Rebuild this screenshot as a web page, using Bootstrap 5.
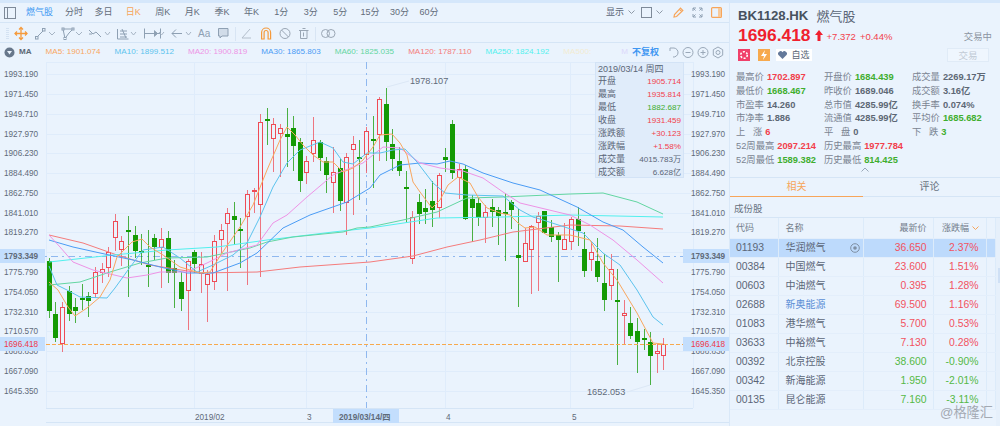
<!DOCTYPE html>
<html lang="zh">
<head>
  <meta charset="UTF-8" />
  <meta name="viewport" content="width=device-width, initial-scale=1.0" />
  <title>BK1128.HK 燃气股</title>
  <link href="https://cdn.jsdelivr.net/npm/bootstrap@5.3.0/dist/css/bootstrap.min.css" rel="stylesheet" />
  <style>
    html, body { height: 426px; overflow: hidden; }
    body {
      background: #eaf3fd;
      color: #5b6677;
      font: 10px/1 "Liberation Sans", "Noto Sans CJK SC", sans-serif;
    }
    .page { height: 426px; border-top: 3px solid #d5e7fb; }
    .left-pane { width: 729px; flex: none; }
    .right-pane { width: 271px; flex: none; border-left: 1px solid #d9e8f8; }
    .bar-top { height: 20px; padding-left: 4px; border-bottom: 1px solid #d5e5f6; font-size: 9px; }
    .panel-ico { margin-right: 10px; flex: none; }
    .bar-top span.tf { width: 29.6px; text-align: center; color: #626c7a; }
    .bar-top span.tf.first { width: 33.2px; color: #3b97f2; text-align: left; }
    .bar-top span.tf.on { color: #f7a55a; }
    .bar-right { padding-right: 7px; gap: 8px; }
    .show-btn { margin-right: -2px; }
    .pen-ico { margin-left: 2px; }
    .bar-tools { height: 20px; padding-left: 0; border-bottom: 1px solid #d5e5f6; }
    .bar-tools text { font: 10px "Liberation Sans", sans-serif; fill: #8ea0b3; }
    .legend-row { height: 19px; padding: 0 5px 0 4px; font-size: 8.1px; white-space: nowrap; gap: 14px; }
    .legend-mark { color: #5d6875; gap: 4px; }
    .fq-btn { color: #3f97f2; font-size: 9px; font-weight: 700; margin-right: -4px; }
    .fq-tail { color: #dcd7fb; margin-right: -10px; }
    .chart-wrap { height: 361px; }
    .chart-wrap svg { display: block; }
    .chart-wrap text { font: 8.2px "Liberation Sans", "Noto Sans CJK SC", sans-serif; fill: #5f6a79; }
    .info-box {
      position: absolute; left: 595px; top: 0; width: 89px; height: 116px;
      background: #e0ecfa; border: 1px solid #d3e3f6; padding: 0 2px;
      font-size: 9px; color: #5b6677;
    }
    .info-box div { height: 13px; line-height: 13px; white-space: nowrap; }
    .info-box div.info-date { height: 12px; line-height: 12px; }
    .info-box b { font-weight: 400; font-size: 8.1px; }
    .up { color: #f23f4c; }
    .down { color: #3fae2f; }
    .hd-top { height: 14px; margin-top: 1px; }
    .hd-code { font-size: 13.2px; font-weight: 700; color: #47525f; }
    .hd-name { font-size: 13px; color: #5b6677; margin-left: 8px; }
    .hd-price { font-size: 17.4px; font-weight: 700; color: #f01f2e; line-height: 20px; }
    .hd-chg { font-size: 9.5px; color: #f23f4c; }
    .hd-state { font-size: 9.4px; color: #8a94a1; }
    .hd-icons { margin-top: 3px; }
    .trade-btn {
      width: 42px; height: 14px; line-height: 13px; text-align: center; background: #eff6fe;
      border: 1px solid #e0ebf7; color: #c2cbd6; font-size: 9.5px; margin-right: 3px;
    }
    .self-btn { background: #fff; height: 12px; width: 36px; font-size: 9px; color: #5b6677; margin-left: 6px; }
    .stat-grid { display: grid; grid-template-columns: 88px 88px auto; row-gap: 0; padding-left: 6px; margin-top: 9px; }
    .stat-grid > div { height: 13.75px; line-height: 13.75px; font-size: 9.3px; white-space: nowrap; }
    .stat-grid .lb { color: #7a8492; }
    .stat-grid .vl { font-weight: 700; margin-left: 3px; }
    .gray-v { color: #5d6875; }
    .fold-row { height: 10px; line-height: 0; }
    .tab-row { height: 20px; border-top: 1px solid #d5e5f6; border-bottom: 1px solid #d5e5f6; font-size: 10px; }
    .tab-on { width: 133px; height: 19px; line-height: 18px; color: #f7a55a; border-bottom: 1px solid #f7a55a; text-align: center; }
    .tab-off { width: 133px; line-height: 18px; text-align: center; color: #687280; }
    .sec-title { height: 21px; line-height: 23px; padding-left: 4px; font-size: 9.5px; color: #687280; border-bottom: 1px solid #d5e5f6; }
    .stock-table { width: 265px; table-layout: fixed; border-collapse: collapse; font-size: 10.4px; }
    .stock-table td, .stock-table th {
      height: 19px; padding: 0 6px; border-right: 1px solid #dcebfa; border-bottom: 1px solid #e3eefb;
      color: #5b6677; font-weight: 400; white-space: nowrap;
    }
    .stock-table th { height: 20px; font-size: 9px; color: #727c8a; }
    .stock-table td.name-cell { font-size: 10px; padding-left: 7px; }
    .stock-table .pct-cell { padding-right: 7px; }
    .stock-table td.up { color: #f2525f; }
    .stock-table td.down { color: #55b945; }
    .stock-table tr.picked td { background: #bddafc; }
    .stock-table td.link-name { color: #5b8fd6; }
    .eye-mark { margin-right: -3px; }
    .table-box { height: 198px; }
    .scroll-side { width: 5px; background: #e6f0fb; }
    .scroll-thumb { height: 15px; margin: 50px 0 0 2px; background: #cfe0f5; }
    .stamp { position: absolute; right: 7px; bottom: 7px; font-size: 13.2px; color: #a3a9b2; }
  </style>
</head>
<body>
<div class="page d-flex">
  <div class="left-pane d-flex flex-column">
    <div class="bar-top d-flex align-items-center">
      <svg class="panel-ico" width="12" height="12" viewBox="0 0 12 12"><rect x=".5" y=".5" width="11" height="11" fill="none" stroke="#7e8a99"/><path d="M3.500 1v10" stroke="#7e8a99"/></svg>
      <span class="tf first">燃气股</span>
      <span class="tf">分时</span><span class="tf">多日</span><span class="tf on">日K</span><span class="tf">周K</span><span class="tf">月K</span><span class="tf">季K</span><span class="tf">年K</span><span class="tf">1分</span><span class="tf">3分</span><span class="tf">5分</span><span class="tf">15分</span><span class="tf">30分</span><span class="tf">60分</span>
      <div class="ms-auto d-flex align-items-center bar-right">
        <span class="d-flex align-items-center gap-1 show-btn">显示<svg width="7" height="5" viewBox="0 0 7 5"><path d="M.5.5 3.500 3.500 6.500.5" fill="none" stroke="#8f9aa8"/></svg></span>
        <span class="d-flex align-items-center gap-1"><svg width="11" height="11" viewBox="0 0 11 11"><rect x=".5" y=".5" width="10" height="10" fill="none" stroke="#7e8a99"/></svg><svg width="7" height="5" viewBox="0 0 7 5"><path d="M.5.5 3.500 3.500 6.500.5" fill="none" stroke="#8f9aa8"/></svg></span>
        <svg class="pen-ico" width="11" height="11" viewBox="0 0 11 11"><path d="M1 10 1.500 7.500 7.500 1.200 9.800 3.400 3.600 9.500Z M6.500 2.400 8.700 4.600" fill="none" stroke="#f7a55a" stroke-width="1.200"/></svg>
        <svg width="11" height="11" viewBox="0 0 11 11"><path d="M1 4V1h3M7 1h3v3M1 7v3h3M7 10h3V7M1 1l2.500 2.500M10 1 7.500 3.500M1 10l2.500-2.500M10 10 7.500 7.500" fill="none" stroke="#8ea0b3"/></svg>
        <svg width="11" height="11" viewBox="0 0 11 11"><rect x=".6" y=".6" width="9.800" height="9.800" rx="1" fill="none" stroke="#f7a55a" stroke-width="1.200"/><rect x="7" y="1" width="3" height="9" fill="#f7c99a"/></svg>
      </div>
    </div>
    <div class="bar-tools d-flex align-items-center">
      <svg width="340" height="20" viewBox="0 0 340 20">
        <g stroke="#d4e2f2"><path d="M6 5.500h3M6 7.500h3M6 9.500h3M6 11.500h3M6 13.500h3M6 15.500h3"/></g>
        <g fill="none" stroke="#f59a3c" stroke-width="1.300"><path d="M21 5v11M15 10.500h12"/><path d="M19 6.500l2-2 2 2M19 14.500l2 2 2-2M17 8.500l-2 2 2 2M25 8.500l2 2-2 2"/></g>
        <g fill="none" stroke="#8ea0b3">
          <path d="M37 14 43 8"/><rect x="35.500" y="13.500" width="2.500" height="2.500"/><rect x="42.500" y="5.500" width="2.500" height="2.500"/>
          <path d="M63 6h10l-4 4-4 5.500Z"/><rect x="62" y="5" width="2" height="2" fill="#eaf3fd"/><rect x="72" y="5" width="2" height="2" fill="#eaf3fd"/><rect x="64" y="14.500" width="2" height="2" fill="#eaf3fd"/>
          <path d="M89 7l4 4 3-2 5 5M89 11l3 0"/>
          <path d="M117.500 6v10h11M120 8h7M120 11h7M120 14h7M122 6l4 9"/>
          <path d="M144.500 5.500v10M160.500 5.500v10M145 10.500h15"/><path d="M154 7.500l3.500 3-3.500 3" fill="#8ea0b3"/>
          <path d="M172 10.500h10M176 6.500l-4 4 4 4"/>
          <path d="M218.500 5.500h9.500v7.500h-6l-2 2v-2h-1.500Z" fill="#b8c6d6" fill-opacity=".5"/>
          <path d="M235.500 4v14" stroke="#d8e5f4"/>
          <path d="M250 6l-8 9h9" stroke="#b4bfcc"/>
          <circle cx="285" cy="10.500" r="5" stroke="#9aa6b4"/><path d="M281.500 7 288.500 14" stroke="#9aa6b4"/>
          <path d="M299 7.500h9.500M300.500 7.500v8h6.500v-8M302.500 5.500h3" stroke="#9aa6b4"/><path d="M303.500 9.500v4" stroke="#9aa6b4"/>
          <path d="M315.500 4v14" stroke="#d8e5f4"/>
          <circle cx="325.500" cy="10.500" r="4" stroke="#9aa6b4"/><circle cx="331" cy="10.500" r="4" stroke="#9aa6b4"/>
        </g>
        <g fill="none" stroke="#a6b4c4"><path d="M49 9l3 3 3-3M76 9l3 3 3-3M105 9l2.500 3 2.500-3M131 9l2.500 3 2.500-3M159 9l2.500 3 2.500-3M186 9l2.500 3 2.500-3"/></g>
        <path d="M261.600 16V9.500a4.500 4.500 0 0 1 9 0V16h-2.500V9.500a2 2 0 0 0-4 0V16Z" fill="none" stroke="#f59a3c" stroke-width="1.200"/>
        <text x="198" y="14">Aa</text>
      </svg>
    </div>
    <div class="legend-row d-flex align-items-center">
      <span class="d-flex align-items-center legend-mark">
        <svg width="11" height="11" viewBox="0 0 11 11"><circle cx="5.500" cy="5.500" r="5" fill="#67778b"/><path d="M3 4h5L5.500 7.500Z" fill="#eaf3fd"/></svg>
        <span class="fw-bold">MA</span>
      </span>
      <span style="color:#f9a75f">MA5: 1901.074</span>
      <span style="color:#5cc3ee">MA10: 1899.512</span>
      <span style="color:#ee93e6">MA20: 1900.819</span>
      <span style="color:#4b9cf5">MA30: 1865.803</span>
      <span style="color:#63d6a2">MA60: 1825.035</span>
      <span style="color:#f57c7c">MA120: 1787.110</span>
      <span style="color:#52f0ee">MA250: 1824.192</span>
      <span style="color:#f3ecd2">MA500:</span>
      <span class="ms-auto fq-tail">M</span>
      <span class="fq-btn">不复权</span>
      <svg width="55" height="13" viewBox="0 0 55 13" fill="none" stroke="#9aa8b8">
        <path d="M1 2h4a4.500 4.500 0 1 1-1 9"/><path d="M1 2v3"/>
        <circle cx="19" cy="6.500" r="5"/><path d="M16.500 6.500h5"/>
        <circle cx="34" cy="6.500" r="5"/><path d="M31.500 6.500h5M34 4v5"/>
        <circle cx="49" cy="6.500" r="2"/><path d="M49 1l4.700 2.700v5.500L49 12l-4.700-2.800V3.700Z"/>
      </svg>
    </div>
    <div class="chart-wrap position-relative">
      <svg id="chart" width="729" height="361" viewBox="0 62 729 361"></svg>
      <div class="info-box">
        <div class="info-date">2019/03/14 周四</div>
        <div class="d-flex justify-content-between"><span>开盘</span><b class="up">1905.714</b></div>
        <div class="d-flex justify-content-between"><span>最高</span><b class="up">1935.814</b></div>
        <div class="d-flex justify-content-between"><span>最低</span><b class="down">1882.687</b></div>
        <div class="d-flex justify-content-between"><span>收盘</span><b class="up">1931.459</b></div>
        <div class="d-flex justify-content-between"><span>涨跌额</span><b class="up">+30.123</b></div>
        <div class="d-flex justify-content-between"><span>涨跌幅</span><b class="up">+1.58%</b></div>
        <div class="d-flex justify-content-between"><span>成交量</span><b>4015.783万</b></div>
        <div class="d-flex justify-content-between"><span>成交额</span><b>6.628亿</b></div>
      </div>
    </div>
  </div>
  <div class="right-pane d-flex flex-column position-relative">
    <div class="px-2" style="padding-top:5px">
      <div class="d-flex align-items-center hd-top"><span class="hd-code">BK1128.HK</span><span class="hd-name">燃气股</span></div>
      <div class="d-flex align-items-end" style="margin-top:2px">
        <span class="hd-price">1696.418</span>
        <svg class="mx-1 mb-1" width="8" height="11" viewBox="0 0 8 11"><path d="M4 0 8 5H5.500V11h-3V5H0Z" fill="#f01f2e"/></svg>
        <span class="hd-chg mb-1">+7.372</span><span class="hd-chg mb-1 ms-1">+0.44%</span>
        <span class="ms-auto mb-1 hd-state">交易中</span>
      </div>
      <div class="d-flex align-items-center hd-icons">
        <svg width="12" height="12" viewBox="0 0 12 12"><rect width="12" height="12" fill="#f0406a"/><circle cx="6" cy="6" r="3.300" fill="none" stroke="#fff" stroke-width="1.600" stroke-dasharray="2 1.500"/></svg>
        <svg class="ms-2" width="12" height="12" viewBox="0 0 12 12"><rect width="12" height="12" fill="#f7a94d"/><path d="M7 1 3 7h3L5 11l4-6H6Z" fill="#fff"/></svg>
        <span class="self-btn d-flex align-items-center justify-content-center">
          <svg width="9" height="8" viewBox="0 0 9 8" class="me-1"><path d="M4.500 8 .5 4A2.300 2.300 0 0 1 4.500 1.300 2.300 2.300 0 0 1 8.500 4Z" fill="#64799a"/></svg>自选
        </span>
        <span class="trade-btn ms-auto">交易</span>
      </div>
    </div>
    <div class="stat-grid">
      <div><span class="lb">最高价</span><span class="vl up">1702.897</span></div><div><span class="lb">开盘价</span><span class="vl down">1684.439</span></div><div><span class="lb">成交量</span><span class="vl gray-v">2269.17万</span></div>
      <div><span class="lb">最低价</span><span class="vl down">1668.467</span></div><div><span class="lb">昨收价</span><span class="vl gray-v">1689.046</span></div><div><span class="lb">成交额</span><span class="vl gray-v">3.16亿</span></div>
      <div><span class="lb">市盈率</span><span class="vl gray-v">14.260</span></div><div><span class="lb">总市值</span><span class="vl gray-v">4285.99亿</span></div><div><span class="lb">换手率</span><span class="vl gray-v">0.074%</span></div>
      <div><span class="lb">市净率</span><span class="vl gray-v">1.886</span></div><div><span class="lb">流通值</span><span class="vl gray-v">4285.99亿</span></div><div><span class="lb">平均价</span><span class="vl down">1685.682</span></div>
      <div><span class="lb">上&nbsp;&nbsp;&nbsp;涨</span><span class="vl up">6</span></div><div><span class="lb">平&nbsp;&nbsp;&nbsp;盘</span><span class="vl gray-v">0</span></div><div><span class="lb">下&nbsp;&nbsp;&nbsp;跌</span><span class="vl down">3</span></div>
      <div><span class="lb">52周最高</span><span class="vl up">2097.214</span></div><div><span class="lb">历史最高</span><span class="vl up">1977.784</span></div><div></div>
      <div><span class="lb">52周最低</span><span class="vl down">1589.382</span></div><div><span class="lb">历史最低</span><span class="vl down">814.425</span></div><div></div>
    </div>
    <div class="text-center fold-row"><svg width="8" height="5" viewBox="0 0 8 5"><path d="M.5 4.500 4 1l3.500 3.500" fill="none" stroke="#9aa8b8"/></svg></div>
    <div class="tab-row d-flex"><div class="tab-on">相关</div><div class="tab-off">评论</div></div>
    <div class="sec-title">成份股</div>
    <div class="d-flex flex-grow-1">
      <div class="table-box">
        <table class="stock-table">
          <colgroup><col style="width:48px"><col style="width:85px"><col style="width:70px"><col style="width:53px"><col style="width:9px"></colgroup>
          <thead><tr><th>代码</th><th style="padding-left:7px">名称</th><th class="text-end">最新价</th><th class="text-end pct-cell">涨跌幅 <svg width="7" height="5" viewBox="0 0 7 5"><path d="M.5.5 3.500 3.500 6.500.5" fill="none" stroke="#f7a55a"/></svg></th><th></th></tr></thead>
          <tbody id="rows"></tbody>
        </table>
      </div>
      <div class="scroll-side"><div class="scroll-thumb"></div></div>
    </div>
    <span class="stamp">@格隆汇</span>
  </div>
</div>
<script>
  // [up?, high, bodyTop, bodyBottom, low] in picture y
  const candles = [
    [0,258,261,311,318],[0,302,314,338,342],[1,302,307,343,352],[0,286,291,314,321],[0,298,307,311,323],[0,284,298,300,310],
    [0,292,296,301,317],[1,267,272,293,298],[1,263,269,272,283],[1,247,252,267,277],[1,214,221,237,251],[1,236,241,249,266],
    [0,216,230,232,297],[0,226,235,251,258],[0,234,251,253,265],[0,230,265,266,287],[0,234,238,247,260],[1,228,239,247,288],
    [0,231,238,273,283],[0,260,268,273,308],[0,272,282,299,311],[1,259,261,290,330],[0,250,252,264,273],[1,252,264,273,293],
    [1,270,274,284,322],[1,235,241,281,290],[1,224,230,239,253],[1,208,213,223,291],[0,202,216,220,245],[0,218,229,231,268],
    [1,190,194,216,285],[1,188,190,191,213],[1,114,122,204,277],[0,108,119,121,145],[1,118,124,138,172],[1,124,128,133,177],
    [0,108,134,137,167],[0,116,128,146,171],[0,138,142,181,192],[1,156,161,172,184],[1,117,140,153,162],[0,140,142,158,171],
    [0,157,161,175,193],[1,147,172,182,213],[0,159,168,201,211],[1,153,157,202,235],[1,136,144,149,215],[0,140,157,159,200],
    [1,127,131,154,173],[0,116,139,141,188],[1,97,99,134,161],[0,88,104,142,161],[0,129,144,159,171],[0,147,161,171,176],
    [0,171,187,188,223],[1,211,217,258,264],[0,194,202,214,224],[0,189,208,212,224],[0,181,201,210,227],[1,173,175,207,218],
    [0,148,157,160,172],[0,120,124,173,179],[1,164,169,177,199],[0,165,169,219,220],[0,195,199,208,242],[0,198,203,218,226],
    [1,205,212,217,243],[0,199,207,212,227],[0,207,210,216,245],[0,193,212,214,261],[0,200,202,210,229],[0,209,255,258,307],
    [1,228,243,261,262],[1,225,226,249,294],[1,212,216,222,291],[0,211,211,233,234],[0,220,227,237,242],[0,232,235,240,282],
    [1,223,239,249,250],[1,217,219,241,250],[0,207,219,231,246],[0,232,249,271,277],[1,241,252,259,271],[0,238,261,277,282],
    [0,254,283,300,311],[1,254,269,285,300],[0,269,300,302,365],[1,300,313,315,344],[0,307,323,336,339],[0,318,331,342,373],
    [0,329,338,340,350],[0,332,342,356,385],[1,344,351,353,373],[1,338,344,355,370]
  ];
  const lines = [
    ['#f57c7c',[[49,235],[83,243],[117,255],[150,265],[200,273],[257,272],[300,267],[370,262],[413,256],[447,247],[480,240],[513,232],[570,225],[620,226],[663,229]]],
    ['#52f0ee',[[49,262],[113,255],[167,250],[217,247],[267,240],[333,232],[370,228],[437,218],[503,217],[570,215],[663,217]]],
    ['#63d6a2',[[49,285],[80,282],[110,272],[140,263],[167,258],[207,257],[250,248],[267,242],[293,237],[343,232],[357,228],[370,227],[403,220],[437,212],[467,198],[503,197],[570,194],[603,193],[637,202],[663,214]]],
    ['#4b9cf5',[[49,240],[73,247],[100,253],[133,260],[160,267],[187,273],[213,273],[240,263],[257,253],[283,228],[310,215],[347,202],[370,188],[380,175],[400,165],[420,163],[437,164],[450,161],[463,164],[483,173],[513,183],[540,190],[577,207],[603,222],[623,230],[643,247],[663,263]]],
    ['#ee93e6',[[49,235],[60,247],[73,262],[93,270],[127,278],[147,275],[160,272],[187,272],[207,263],[227,253],[257,245],[273,223],[287,215],[307,197],[333,175],[363,163],[383,147],[400,148],[420,163],[440,168],[463,171],[483,178],[503,192],[520,203],[570,215],[590,225],[613,240],[637,260],[663,283]]],
    ['#5cc3ee',[[49,266],[57,285],[67,290],[80,297],[107,298],[115,288],[128,270],[143,250],[163,247],[180,258],[197,272],[213,265],[233,255],[247,243],[260,217],[273,187],[287,163],[300,150],[320,142],[333,148],[343,162],[353,164],[367,153],[380,153],[393,150],[405,149],[417,162],[433,183],[445,193],[467,195],[503,196],[520,210],[533,217],[543,220],[583,233],[603,253],[620,265],[637,290],[653,317],[663,325]]],
    ['#f9a75f',[[49,282],[58,290],[68,307],[75,316],[87,308],[100,297],[110,280],[117,257],[132,242],[142,239],[150,247],[163,255],[180,267],[200,273],[210,272],[222,253],[240,227],[253,205],[267,170],[280,140],[287,127],[295,135],[303,145],[313,155],[323,162],[333,162],[343,172],[353,168],[363,160],[373,147],[380,135],[392,134],[400,143],[407,155],[413,182],[420,192],[432,208],[440,200],[448,185],[458,177],[470,183],[478,197],[487,208],[500,213],[510,215],[518,223],[525,228],[535,227],[547,235],[570,235],[590,240],[603,263],[617,280],[637,313],[653,343],[663,344]]]
  ];
  const axis = ['1993.190','1971.450','1949.710','1927.970','1906.230','1884.490','1862.750','1841.010','1819.270',null,'1775.790','1754.050','1732.310','1710.570','1688.830','1667.090','1645.350'];
  const red = '#ef4b55', green = '#149a04';
  let s = '';
  // grid
  axis.forEach((_, i) => { const y = Math.round(74.4 + i * 19.76) + .5; s += `<path d="M46 ${y}H693" stroke="#dfecfb"/>`; });
  [46.5,194.5,306.5,445.5,570.5,693.5].forEach(x => { s += `<path d="M${x} 62V408" stroke="#dfecfb"/>`; });
  s += `<path d="M46 62.5H693" stroke="#dfecfb"/><path d="M46 408.5H693" stroke="#d5e5f6"/><path d="M46 422.5H729" stroke="#d5e5f6"/>`;
  // crosshair
  s += `<path d="M0 256.5H729" stroke="#8fb8ef" stroke-dasharray="7 4 2 4"/><path d="M366.5 62V408" stroke="#8fb8ef" stroke-dasharray="7 4 2 4"/>`;
  // candles
  candles.forEach((c, i) => {
    const x = Math.round(48.7 + i * 6.61);
    const col = c[0] ? red : green;
    s += `<path d="M${x + .5} ${c[1]}V${c[4]}" stroke="${col}" stroke-opacity=".75"/>`;
    if (c[0]) s += `<rect x="${x - 2 + .5}" y="${c[2] + .5}" width="4" height="${Math.max(c[3] - c[2], 1)}" fill="#eaf3fd" stroke="${col}"/>`;
    else s += `<rect x="${x - 2}" y="${c[2]}" width="5" height="${Math.max(c[3] - c[2], 2)}" fill="${col}"/>`;
  });
  // moving averages
  lines.forEach(l => {
    s += `<polyline fill="none" stroke="${l[0]}" stroke-width="1" points="${l[1].map(p => p.join(',')).join(' ')}"/>`;
  });
  // last price
  s += `<path d="M46 344.5H729" stroke="#f7a94d" stroke-dasharray="4 2"/>`;
  // axis labels
  axis.forEach((t, i) => {
    if (!t) return;
    const y = 77.4 + i * 19.76;
    s += `<text x="4" y="${y}">${t}</text><text x="691" y="${y}">${t}</text>`;
  });
  [[0, 45, 4], [683, 46, 691]].forEach(t => {
    s += `<rect x="${t[0]}" y="249" width="${t[1]}" height="14" fill="#c3defd"/><text x="${t[2]}" y="259" style="font-weight:700">1793.349</text>`;
    s += `<rect x="${t[0]}" y="337" width="${t[1]}" height="14" fill="#c3defd"/><text x="${t[2]}" y="347" style="fill:#f0394a">1696.418</text>`;
  });
  // extreme marks
  s += `<path d="M387 87 409 81" stroke="#dce8f6"/><path d="M627 392 650 385" stroke="#dce8f6"/>`;
  s += `<text x="410" y="84" style="font-size:9.2px">1978.107</text><text x="587" y="395" style="font-size:9.2px">1652.053</text>`;
  // x axis
  s += `<rect x="333" y="409" width="66" height="14" fill="#c3defd"/>`;
  s += `<text x="195" y="419.5">2019/02</text><text x="307" y="419.5">3</text><text x="339" y="419.5" style="font-weight:700">2019/03/14/四</text><text x="446" y="419.5">4</text><text x="572" y="419.5">5</text>`;
  document.getElementById('chart').innerHTML = s;

  const stocks = [
    ['01193','华润燃气','36.650','2.37%',1],['00384','中国燃气','23.600','1.51%',1],['00603','中油燃气','0.395','1.28%',1],
    ['02688','新奥能源','69.500','1.16%',1],['01083','港华燃气','5.700','0.53%',1],['03633','中裕燃气','7.130','0.28%',1],
    ['00392','北京控股','38.600','-0.90%',0],['00342','新海能源','1.950','-2.01%',0],['00135','昆仑能源','7.160','-3.11%',0]
  ];
  document.getElementById('rows').innerHTML = stocks.map((r, i) => {
    const cls = r[4] ? 'up' : 'down';
    const eye = i === 0 ? '<svg class="float-end eye-mark" width="10" height="10" viewBox="0 0 10 10"><circle cx="5" cy="5" r="4.300" fill="none" stroke="#7f8fa3"/><circle cx="5" cy="5" r="1.800" fill="#7f8fa3"/></svg>' : '';
    return `<tr class="${i === 0 ? 'picked' : ''}"><td>${r[0]}</td><td class="name-cell ${i === 3 ? 'link-name' : ''}">${r[1]}${eye}</td><td class="text-end ${cls}">${r[2]}</td><td class="text-end pct-cell ${cls}">${r[3]}</td><td></td></tr>`;
  }).join('');
</script>
<script src="https://cdn.jsdelivr.net/npm/bootstrap@5.3.0/dist/js/bootstrap.bundle.min.js"></script>
</body>
</html>
